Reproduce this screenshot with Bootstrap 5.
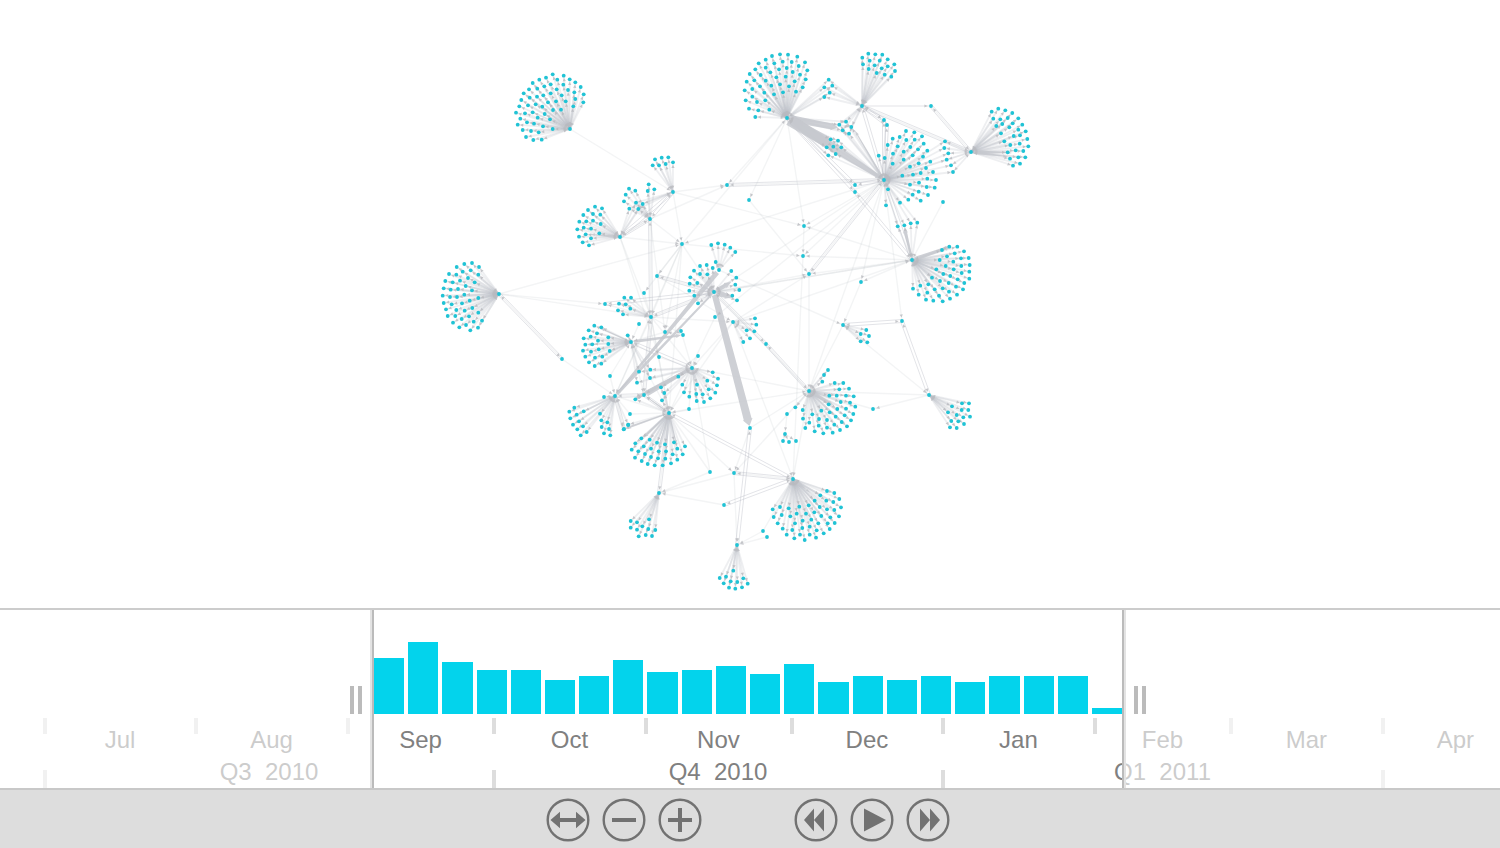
<!DOCTYPE html>
<html lang="en">
<head>
<meta charset="utf-8">
<meta name="viewport" content="width=device-width, initial-scale=1">
<title>Network timeline</title>
<link href="https://cdn.jsdelivr.net/npm/bootstrap@5.3.0/dist/css/bootstrap.min.css" rel="stylesheet">
<style>
  body { font-family: "Liberation Sans", Arial, sans-serif; background: #fff; }
  .graph-area { min-height: 0; }
  .graph-area svg { width: 100%; height: 100%; }
  .timeline { border-top: 2px solid #ccc; height: 180px; font-size: 24px; line-height: 32px; color: #808080; }
  .lead-in { flex: none; width: 24.9333%; }
  .span-in { flex: none; width: 49.8667%; }
  .lead-out { flex: none; width: 25.2%; }
  .histogram { height: 104px; }
  .bars { gap: 4px; }
  .bar { flex: 1 1 0; background: #03d3ec; }
  .scale-row { padding-left: 2.8667%; }
  .months { height: 52px; margin-top: 4px; }
  .quarters { height: 18px; }
  .period { flex: none; padding-left: 3px; text-align: center; white-space: pre; background: linear-gradient(#ddd, #ddd) 0 0 / 4px 16px no-repeat; }
  .months .period { padding-top: 6px; }
  .quarters .period { background-size: 4px 18px; line-height: 4px; }
  .shade { background: rgba(255, 255, 255, .6); padding: 76px 10px 0; }
  .shade-left { border-right: 2px solid #bbb; box-shadow: inset -2px 0 #e3e3e3; }
  .shade-right { border-left: 2px solid #bbb; box-shadow: inset 2px 0 #e3e3e3; }
  .grip { width: 12px; height: 28px; padding: 0; border: solid #bbb; border-width: 0 4px; background: none; cursor: ew-resize; }
  .controls { height: 60px; background: #ddd; border-top: 2px solid #c8c8c8; padding: 8px 4px 6px 0; gap: 92px; }
  .control-set { gap: 12px; }
  .round-btn { width: 44px; height: 44px; padding: 0; border: 0; background: none; color: #727272; }
  .round-btn svg { display: block; width: 44px; height: 44px; }
</style>
</head>
<body class="vh-100 d-flex flex-column overflow-hidden">

<main class="graph-area flex-grow-1">
  <svg id="graph" class="d-block" viewBox="0 0 1500 608" role="img" aria-label="Network graph"></svg>
</main>

<section class="timeline position-relative overflow-hidden flex-shrink-0" aria-label="Timeline">
  <div class="histogram d-flex">
    <div class="lead-in"></div>
    <div class="bars span-in d-flex align-items-end" id="bars"></div>
    <div class="lead-out"></div>
  </div>
  <div class="scale-row months d-flex" id="months"></div>
  <div class="scale-row quarters d-flex" id="quarters"></div>
  <div class="position-absolute top-0 start-0 w-100 h-100 d-flex">
    <div class="lead-in shade shade-left d-flex align-items-start justify-content-end">
      <button type="button" class="grip" aria-label="Start of range"></button>
    </div>
    <div class="span-in"></div>
    <div class="lead-out shade shade-right d-flex align-items-start">
      <button type="button" class="grip" aria-label="End of range"></button>
    </div>
  </div>
</section>

<footer class="controls d-flex justify-content-center flex-shrink-0">
  <div class="control-set d-flex">
    <button type="button" class="round-btn" aria-label="Fit"><svg viewBox="0 0 44 44" fill="currentColor"><circle cx="22" cy="22" r="20.3" fill="none" stroke="currentColor" stroke-width="2.4"/><path d="M4.500 22 14 13.800V20H30V13.800L39.500 22 30 30.200V24H14V30.200Z"/></svg></button>
    <button type="button" class="round-btn" aria-label="Zoom out"><svg viewBox="0 0 44 44" fill="currentColor"><circle cx="22" cy="22" r="20.300" fill="none" stroke="currentColor" stroke-width="2.400"/><path d="M10 20H34V24H10Z"/></svg></button>
    <button type="button" class="round-btn" aria-label="Zoom in"><svg viewBox="0 0 44 44" fill="currentColor"><circle cx="22" cy="22" r="20.300" fill="none" stroke="currentColor" stroke-width="2.400"/><path d="M10 20H20V10H24V20H34V24H24V34H20V24H10Z"/></svg></button>
  </div>
  <div class="control-set d-flex">
    <button type="button" class="round-btn" aria-label="Back"><svg viewBox="0 0 44 44" fill="currentColor"><circle cx="22" cy="22" r="20.300" fill="none" stroke="currentColor" stroke-width="2.400"/><path d="M10 22 20 10.500V33.500ZM20 22 30 10.500V33.500Z"/></svg></button>
    <button type="button" class="round-btn" aria-label="Play"><svg viewBox="0 0 44 44" fill="currentColor"><circle cx="22" cy="22" r="20.300" fill="none" stroke="currentColor" stroke-width="2.400"/><path d="M14 10.500 36 22 14 33.500Z"/></svg></button>
    <button type="button" class="round-btn" aria-label="Forward"><svg viewBox="0 0 44 44" fill="currentColor"><circle cx="22" cy="22" r="20.300" fill="none" stroke="currentColor" stroke-width="2.400"/><path d="M24 22 14 10.500V33.500ZM34 22 24 10.500V33.500Z"/></svg></button>
  </div>
</footer>

<script src="https://cdn.jsdelivr.net/npm/bootstrap@5.3.0/dist/js/bootstrap.bundle.min.js"></script>
<script>
// Weekly counts shown as bar heights.
document.getElementById('bars').innerHTML =
  [56,72,52,44,44,34,38,54,42,44,48,40,50,32,38,34,38,32,38,38,38,6]
    .map(h => `<div class="bar" style="height:${h}px"></div>`).join('');

// Periods as [label, share of a 1500-unit time axis].
const periods = list => list.map(([t, w]) =>
  `<div class="period" style="width:${w / 1457 * 100}%">${t}</div>`).join('');
document.getElementById('months').innerHTML = periods([['Jul',151],['Aug',152],['Sep',146],['Oct',152],['Nov',146],['Dec',151],['Jan',152],['Feb',136],['Mar',152],['Apr',146]]);
document.getElementById('quarters').innerHTML = periods([['Q3  2010',449],['Q4  2010',449],['Q1  2011',440],['',449]]);

// Named nodes of the network.
const N = {
  A:[570,129],B:[620,237],C:[499,294],D:[673,192],E:[650,219],F:[714,292],F2:[719,270],S:[682,244],T:[651,317],
  U:[787,118],V:[862,106],W:[884,180],G:[971,152],H:[631,342],I:[615,396],J:[692,368],K:[669,413],L:[644,395],
  X:[750,428],M:[912,260],N:[929,395],O:[809,391],P:[793,479],Q:[659,493],R:[737,545],Y:[843,325],Z:[902,321],
  a:[804,226],b:[803,256],c:[809,274],d:[861,282],e:[733,322],f:[766,344],g:[562,359],h:[710,472],i:[734,473],
  j:[724,505],k:[763,531],l:[727,185],m:[873,409],n:[931,106],o:[943,202],p:[715,317],q:[665,332],r:[657,276],
  s:[644,293],t:[639,324],u:[610,376],v:[659,357],w:[698,356],x:[689,409],y:[749,200],z:[630,414],
  a1:[767,537],a2:[683,335],a3:[681,331],a4:[855,185],a5:[855,192],a6:[884,120],a7:[887,125],a8:[787,414],a9:[785,434],
  b1:[783,441],b2:[789,442],b3:[796,441],b4:[605,304],b5:[628,425],b6:[624,429]
};

// Clusters: hubs, origin, and leaves as x,y in thirds of a unit from the origin.
const clusters = [
 ['A',430,40,'368,103 401,107 348,113 328,119 382,119 419,118 308,129 436,127 362,133 400,134 452,141 343,139 322,146 297,148 380,148 414,150 433,157 281,160 461,163 362,160 340,166 395,166 321,170 299,173 274,180 436,177 354,187 378,184 407,184 460,187 317,193 294,196 268,199 337,200 430,199 369,210 393,209 258,218 285,220 308,217 344,222 271,236 323,233 360,238 291,247 312,251 263,254 339,259 278,270 303,273 368,267 326,277 288,291 310,300 335,299'],
 ['B',430,40,'495,500 516,505 474,510 460,525 489,522 511,524 448,545 469,544 489,542 512,552 442,568 461,563 483,566 508,580 467,583 447,590 483,595 458,607 477,616'],
 ['C',430,40,'126,669 103,672 80,681 147,681 122,691 98,695 57,702 145,704 79,704 114,714 46,723 90,722 68,727 134,727 107,738 41,745 62,749 84,747 126,751 38,767 60,771 81,771 103,764 145,774 119,782 41,789 96,790 65,793 127,804 48,808 79,810 104,812 145,818 53,828 76,828 117,829 95,837 156,842 131,845 69,848 108,855 88,862 144,863 121,871'],
 ['D',560,140,'285,58 305,53 325,52 278,76 297,76 317,72 339,67'],
 ['E',560,140,'266,133 263,153 283,148 207,146 226,152 197,164 192,184'],
 ['B E D',560,140,'228,188 248,192 208,206 235,207'],
 ['F',560,140,'420,378 440,375 402,392 458,384 420,402 442,403 391,412 412,429 389,431 388,452 403,467 414,490 514,393 529,413 526,434 538,450 517,467 531,481'],
 ['F2',560,140,'454,315 474,310 494,314 511,323 526,336 467,366'],
 ['T',560,140,'193,473 213,473 177,491 197,493 211,506 174,511 189,523'],
 ['e',560,140,'585,535 589,554 560,571 583,574 570,595 550,606'],
 ['U',720,40,'180,43 204,44 156,48 232,50 137,59 188,65 215,66 255,67 116,70 163,70 236,78 137,83 106,88 177,88 200,84 262,91 151,97 218,96 89,102 122,105 240,104 169,112 197,110 257,118 80,125 103,121 137,122 224,124 154,137 180,133 207,139 248,142 120,139 74,151 97,147 228,155 133,158 189,157 162,163 97,170 77,181 111,186 136,181 87,206 115,211 148,209 106,231'],
 ['V',720,40,'445,41 466,43 487,44 427,53 503,58 449,62 479,62 523,73 429,73 464,76 503,79 485,85 446,87 525,93 470,99 494,104 514,110'],
 ['U V',720,40,'326,119 337,137 313,142 329,158 313,171'],
 ['U V W',720,40,'378,245 358,254 394,261 368,271 387,281'],
 ['U W',720,40,'332,298 354,302 320,322 340,320 364,322 347,342 325,346'],
 ['W',850,40,'168,273 193,277 216,289 149,291 128,296 169,300 194,299 113,315 143,319 181,321 221,311 204,328 161,335 232,332 129,341 188,346 219,350 86,347 104,354 161,359 128,371 206,370 241,365 180,380 228,384 212,399 249,396 157,407 189,404 232,416 258,420 207,428 180,434 230,441 254,443 206,455 188,464 234,465 175,479 212,482 150,488 108,496 114,448'],
 ['W G',850,40,'285,304 283,324 295,340 290,359 303,376 309,396'],
 ['W M',850,40,'143,559 163,556 182,550 202,548'],
 ['G',850,40,'425,215 445,206 466,211 487,219 430,236 451,238 473,234 505,235 457,252 439,258 488,250 517,254 478,262 505,269 527,274 453,280 491,288 510,286 532,297 463,304 481,315 509,311 535,319 497,331 520,333 473,337 505,352 526,352 480,356 510,371 489,377'],
 ['H',560,300,'103,77 124,82 86,91 111,100 92,110 71,115 145,112 114,122 76,134 97,133 145,132 69,152 93,155 116,148 149,153 76,170 105,173 127,170 87,187 104,198 124,191 203,106'],
 ['I',560,300,'43,323 28,335 71,334 50,344 31,355 69,379 57,364 39,374 52,388 80,396 62,406 120,341 124,361 142,367 125,381 147,387 132,400 151,406 132,291'],
 ['J',560,300,'458,217 474,236 442,242 411,254 367,254 471,256 446,268 428,283 466,278 372,277 388,290 409,282 451,295 410,303 432,306 355,230'],
 ['K',560,300,'244,415 269,419 226,430 291,428 342,427 315,433 251,439 375,439 215,449 273,446 352,446 235,454 296,454 318,454 255,462 338,463 368,463 225,473 273,471 294,475 316,476 352,479 245,483 263,492 284,496 308,496 333,490'],
 ['H J',560,300,'237,215 271,209 231,248 270,234'],
 ['J K',560,300,'303,262 313,279 306,301 226,298'],
 ['I K',560,300,'205,374 191,388'],
 ['Y',750,200,'349,390 332,402 357,408 332,424 352,427'],
 ['M',750,200,'598,140 622,140 576,150 642,154 614,160 591,169 633,175 656,174 569,180 610,185 587,198 634,198 659,195 559,208 611,208 635,219 658,215 580,222 601,228 546,233 623,238 658,236 570,243 596,249 643,249 535,253 511,257 489,266 578,265 618,260 554,268 597,275 639,268 532,278 621,284 506,284 567,287 600,296 528,299 550,302 578,304'],
 ['N',750,200,'636,610 657,610 606,619 635,630 655,630 594,637 620,645 640,652 660,650 604,663 625,664 642,672 600,682 620,684'],
 ['O',750,200,'234,510 222,525 217,545 254,549 280,549 268,568 297,566 238,587 260,587 288,587 311,589 236,613 272,606 300,608 316,620 262,627 288,626 214,632 239,637 310,642 158,630 187,643 136,622 257,650 284,646 159,656 207,657 231,660 275,666 303,661 178,668 253,674 206,677 291,679 166,684 231,683 270,690 194,694 220,700 248,698'],
 ['P',600,430,'681,183 703,189 661,196 718,207 644,212 679,212 700,216 518,238 540,231 566,235 598,230 626,226 659,231 723,232 681,238 703,240 521,261 545,255 590,251 618,251 643,247 571,259 608,272 664,258 691,262 717,259 533,280 585,280 634,269 655,280 683,280 704,279 548,296 577,300 607,294 629,290 650,301 689,297 560,314 600,314 629,314 671,310 583,325 614,330 648,323'],
 ['Q',600,430,'92,273 111,277 147,268 92,293 127,289 111,299 145,297 166,300 116,319 137,315 156,318'],
 ['R',600,430,'400,422 359,444 378,440 430,445 392,454 412,456 443,461 371,460 387,473 406,476 426,472']
];

// Links between named nodes: faint single, paired, and weighted (from, to, start width, end width).
const faint = 'A-D C-S C-b4 C-T B-T B-v B-S E-S E-l D-l D-a D-S S-I S-r S-s S-U S-b S-T S-F S-q y-c U-l U-y U-a V-G n-G W-b W-a W-c W-d W-Z W-S W-p W-F o-M G-W M-a M-b M-c M-d M-F d-Y F2-Y Y-O Y-N N-O N-m m-O T-J F-O F-f f-O c-O b-P a-b e-c e-M e-J e-K O-P O-i X-O O-J X-i h-Q h-K i-Q i-P j-Q e-P i-R k-R a1-R k-P Q-K g-I g-C r-e r-F s-T T-b4 T-F T-e q-H t-H T-L T-K v-J v-H w-J w-L u-H u-I x-J x-K z-K z-I L-I I-K K-H H-L I-T a2-q a3-J T-K E-T B-E E-q T-a2 h-J K-i a8-a9 a9-b1 a9-b2 a9-b3 F-M F-c p-K S-K E-B W-O K-O l-W';
const paired = 'C-g l-W V-a6 V-a7 a6-W a7-W V-W V-G n-G U-a4 U-a5 W-a4 W-M a5-M B-D B-E D-E E-T Y-Z Z-N F-f f-O K-P X-R P-j Q-K H-J I-b6 I-L K-L r-F F-T T-L b4-F c-W i-P';
const single = 'V-n';
const heavy = [['F','X',6,9],['F2','I',5,3],['U','W',12,5],['L','J',6,4],['H','a2',3,3],['K','b6',1,3],['M',[904,226],2,4],['M',[952,246],4,4],['F',[733,281],4,5],['F',[734,298],6,6],
 ['U',[840,128],7,7],['U',[833,146],8,12],['W',[854,129],2,2],['G',[1014,153],4,2],['G',[1010,157],3,2],['O',[835,406],4,3],['F',[703,297],3,2],['H',[598,327],1,2],['I','F',3,3],
 ['K',[642,439],2,3],['K',[677,447],1,2],['K',[658,449],1,2],['B',[588,234],3,2],['K','L',2,2],['J',[633,400],3,4],['A',[551,120],4,1],['P',[812,494],5,1]];

let lines = '', tips = '', dots = '', wedges = '';
const f1 = v => v.toFixed(1);
function link(a, b, o, w) {
  lines += `<path d="M${f1(a[0])} ${f1(a[1])}L${f1(b[0])} ${f1(b[1])}" stroke-opacity="${o}" stroke-width="${w}"/>`;
}
function tip(a, b, gap = 4, s = 1.6) {
  const d = Math.hypot(b[0]-a[0], b[1]-a[1]) || 1, ux = (b[0]-a[0])/d, uy = (b[1]-a[1])/d;
  const x = b[0]-ux*gap, y = b[1]-uy*gap;
  tips += `M${f1(x+ux*s)} ${f1(y+uy*s)}L${f1(x-ux*s-uy*s)} ${f1(y-uy*s+ux*s)}L${f1(x-ux*s+uy*s)} ${f1(y-uy*s-ux*s)}Z`;
}
const dot = p => dots += `<circle cx="${f1(p[0])}" cy="${f1(p[1])}" r="1.9"/>`;
const pairsOf = s => s.split(' ').map(e => e.split('-').map(k => N[k]));

pairsOf(faint).forEach(([a, b]) => { link(a, b, .17, 1.4); tip(a, b, 5); });
pairsOf(single).forEach(([a, b]) => { link(a, b, .4, 1); tip(a, b, 5); });
pairsOf(paired).forEach(([a, b]) => {
  const d = Math.hypot(b[0]-a[0], b[1]-a[1]), x = -(b[1]-a[1])/d*1.5, y = (b[0]-a[0])/d*1.5;
  link([a[0]+x, a[1]+y], [b[0]+x, b[1]+y], .4, 1);
  link([a[0]-x, a[1]-y], [b[0]-x, b[1]-y], .4, 1);
  tip(a, b, 5); tip(b, a, 5);
});
clusters.forEach(([hubs, ox, oy, pts]) => pts.split(' ').forEach(s => {
  const [x, y] = s.split(',').map(Number), p = [ox + x/3, oy + y/3];
  hubs.split(' ').forEach(h => { link(N[h], p, .24, 1.8); tip(N[h], p); tip(p, N[h], 5, 1.3); });
  dot(p);
}));
heavy.forEach(([m, n, w1, w2]) => {
  const a = N[m], b = Array.isArray(n) ? n : N[n], head = w2 > 4 ? 9 : 7;
  const d = Math.hypot(b[0]-a[0], b[1]-a[1]), ux = (b[0]-a[0])/d, uy = (b[1]-a[1])/d;
  const at = (p, back, w) => `${f1(p[0]+ux*back-uy*w/2)} ${f1(p[1]+uy*back+ux*w/2)}`;
  wedges += `<path d="M${at(a,3,w1)}L${at(b,-head,w2-1)}L${at(b,-head,w2+1)}L${at(b,-2,0)}L${at(b,-head,-w2-1)}L${at(b,-head,-w2+1)}L${at(a,3,-w1)}Z"/>`;
});
Object.values(N).forEach(dot);
document.getElementById('graph').innerHTML =
  `<g stroke="#b9bcc6" fill="none">${lines}</g><g fill="#c6c8ce" fill-opacity=".85">${wedges}</g>` +
  `<path d="${tips}" fill="#b8b9be" fill-opacity=".8"/><g fill="#20c3d5">${dots}</g>`;
</script>
</body>
</html>
